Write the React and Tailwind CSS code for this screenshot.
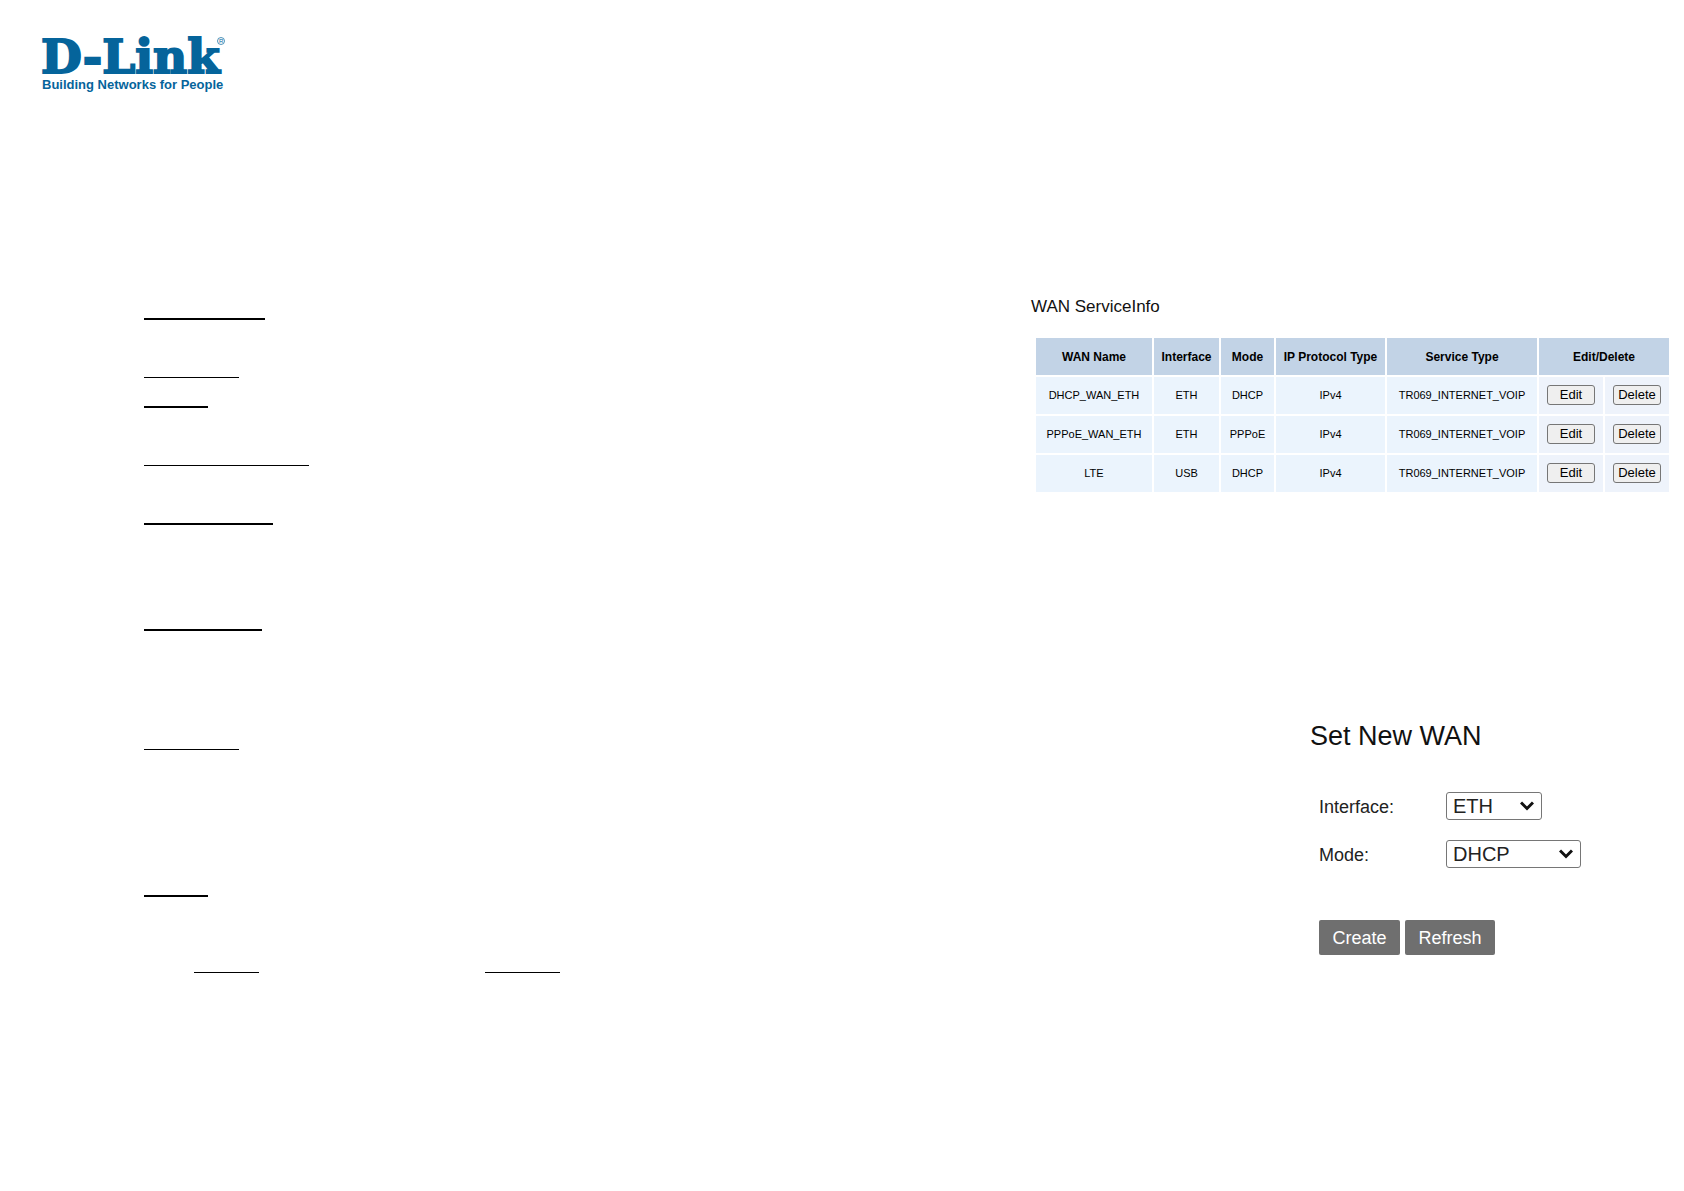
import React from 'react'

const services = [
    { name: 'DHCP_WAN_ETH', iface: 'ETH', mode: 'DHCP', ip: 'IPv4', type: 'TR069_INTERNET_VOIP' },
    { name: 'PPPoE_WAN_ETH', iface: 'ETH', mode: 'PPPoE', ip: 'IPv4', type: 'TR069_INTERNET_VOIP' },
    { name: 'LTE', iface: 'USB', mode: 'DHCP', ip: 'IPv4', type: 'TR069_INTERNET_VOIP' },
]

// thick rules are 2px, thin ones 1px
const rules = [
    'w-[121px] h-[2px]',
    'w-[95px] h-px mt-[57px]',
    'w-[64px] h-[2px] mt-[28px]',
    'w-[165px] h-px mt-[57px]',
    'w-[129px] h-[2px] mt-[57px]',
    'w-[118px] h-[2px] mt-[104px]',
    'w-[95px] h-px mt-[118px]',
    'w-[64px] h-[2px] mt-[145px]',
]

const Logo = () => (
    <svg width="200" height="68" viewBox="0 0 200 68" overflow="visible" role="img" aria-label="D-Link Building Networks for People" fill="#05649b">
        <text x="0" y="37" fontSize="47" fontWeight="700" fontFamily="'DejaVu Serif', serif" stroke="#05649b" strokeWidth="2">D-Link</text>
        <text x="1" y="53" fontSize="13" fontWeight="700" fontFamily="'Liberation Sans', Arial, sans-serif">Building Networks for People</text>
        <circle cx="180" cy="5" r="3.5" fill="none" stroke="#05649b" strokeWidth="0.7" />
        <text x="178" y="7" fontSize="6" fontFamily="'Liberation Sans', sans-serif">R</text>
    </svg>
)

const Notes = () => (
    <div className="pl-[144px] pt-[214px]">
        {rules.map((rule, i) => <div key={i} className={`bg-black ${rule}`}></div>)}
        <div className="flex pl-[50px] mt-[75px]">
            <div className="w-[65px] h-px bg-black"></div>
            <div className="w-[75px] h-px ml-[226px] bg-black"></div>
        </div>
    </div>
)

const RowButton = ({ children, label }) => (
    <button aria-label={label} className="block mx-auto w-12 h-5 border border-[#767676] rounded-[3px] bg-[#efefef] text-[13px] leading-[18px] text-center">{children}</button>
)

const ServiceTable = () => (
    <table className="ml-[3px] border-separate border-spacing-[2px] table-fixed w-[637px] text-center text-black">
        <colgroup>
            <col className="w-[116px]" />
            <col className="w-[65px]" />
            <col className="w-[53px]" />
            <col className="w-[109px]" />
            <col className="w-[150px]" />
            <col className="w-[64px]" />
            <col />
        </colgroup>
        <thead>
            <tr className="h-[37px] bg-[#c2d3e6] text-[12px]">
                <th>WAN Name</th>
                <th>Interface</th>
                <th>Mode</th>
                <th>IP Protocol Type</th>
                <th>Service Type</th>
                <th colSpan="2">Edit/Delete</th>
            </tr>
        </thead>
        <tbody>
            {services.map((s) => (
                <tr key={s.name} className="h-[37px] bg-[#ebf4fd] text-[11px]">
                    <td>{s.name}</td>
                    <td>{s.iface}</td>
                    <td>{s.mode}</td>
                    <td>{s.ip}</td>
                    <td>{s.type}</td>
                    <td className="pb-[2px] bg-[#eef3fb]"><RowButton label={`Edit ${s.name}`}>Edit</RowButton></td>
                    <td className="pb-[2px] bg-[#eef3fb]"><RowButton label={`Delete ${s.name}`}>Delete</RowButton></td>
                </tr>
            ))}
        </tbody>
    </table>
)

const Select = ({ id, value, onChange, options, width }) => (
    <div className={`relative ${width}`}>
        <select id={id} value={value} onChange={onChange} className="block w-full h-7 pl-[6px] appearance-none border border-[#767676] rounded-[3px] bg-white text-[20px] leading-[24px] text-[#222]">
            {options.map((o) => <option key={o}>{o}</option>)}
        </select>
        <svg className="absolute right-2 top-[9px] pointer-events-none" width="14" height="10" viewBox="0 0 14 10" fill="none" stroke="#111" strokeWidth="3">
            <path d="M1 1.5 L7 7.5 L13 1.5" />
        </svg>
    </div>
)

const NewWan = () => {
    const [iface, setIface] = React.useState('ETH')
    const [mode, setMode] = React.useState('DHCP')

    return (
        <form onSubmit={(e) => e.preventDefault()} className="ml-[279px] mt-[226px]">
            <h2 className="text-[27px] leading-[32px] text-[#111]">Set New WAN</h2>
            <div className="flex items-center pl-[9px] mt-10">
                <label htmlFor="iface" className="w-[127px] pt-[2px] text-[18px] leading-[26px] text-[#222]">Interface:</label>
                <Select id="iface" width="w-[96px]" value={iface} onChange={(e) => setIface(e.target.value)} options={['ETH', 'USB']} />
            </div>
            <div className="flex items-center pl-[9px] mt-5">
                <label htmlFor="mode" className="w-[127px] pt-[2px] text-[18px] leading-[26px] text-[#222]">Mode:</label>
                <Select id="mode" width="w-[135px]" value={mode} onChange={(e) => setMode(e.target.value)} options={['DHCP', 'PPPoE']} />
            </div>
            <div className="flex gap-[5px] pl-[9px] mt-[52px] text-[18px] text-white">
                <button className="w-[81px] h-[35px] pt-px rounded-[2px] bg-[#6f6f6f]">Create</button>
                <button className="w-[90px] h-[35px] pt-px rounded-[2px] bg-[#6f6f6f]">Refresh</button>
            </div>
        </form>
    )
}

const App = () => {
    return (
        <div className="min-h-screen bg-white font-['Liberation_Sans',Arial,sans-serif]">
            <header className="h-[104px] pl-[41px] pt-9">
                <Logo />
            </header>
            <main className="flex justify-between">
                <Notes />
                <div className="pt-[192px] pr-[13px] w-[653px] shrink-0">
                    <h2 className="text-[17px] leading-[22px] mb-[18px] text-[#111]">WAN ServiceInfo</h2>
                    <ServiceTable />
                    <NewWan />
                </div>
            </main>
        </div>
    )
}

export default App
